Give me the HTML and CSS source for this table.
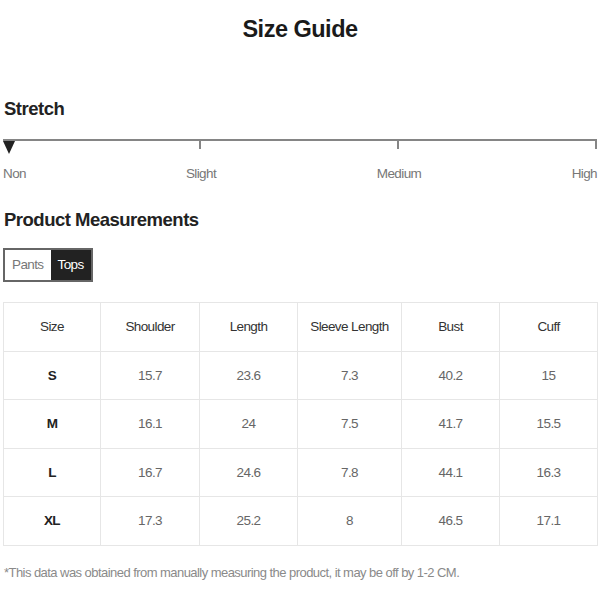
FILE: index.html
```html
<!DOCTYPE html>
<html>
<head>
<meta charset="utf-8">
<link rel="stylesheet" href="styles.css">
</head>
<body>
<div class="page">
  <h1 class="title">Size Guide</h1>

  <h2 class="section-title stretch-title">Stretch</h2>
  <div class="scale">
    <div class="track">
      <div class="seg"></div><div class="seg"></div><div class="seg"></div>
      <div class="marker"></div>
    </div>
    <div class="scale-labels">
      <span class="lbl lbl-start">Non</span>
      <span class="lbl lbl-mid">Slight</span>
      <span class="lbl lbl-mid">Medium</span>
      <span class="lbl lbl-end">High</span>
    </div>
  </div>

  <h2 class="section-title pm-title">Product Measurements</h2>
  <div class="tabs">
    <span class="tab">Pants</span>
    <span class="tab tab-active">Tops</span>
  </div>

  <table class="sizes">
    <colgroup>
      <col class="c1"><col class="c2"><col class="c3"><col class="c4"><col class="c5"><col class="c6">
    </colgroup>
    <thead>
      <tr><th>Size</th><th>Shoulder</th><th>Length</th><th>Sleeve Length</th><th>Bust</th><th>Cuff</th></tr>
    </thead>
    <tbody>
      <tr><td class="sz">S</td><td>15.7</td><td>23.6</td><td>7.3</td><td>40.2</td><td>15</td></tr>
      <tr><td class="sz">M</td><td>16.1</td><td>24</td><td>7.5</td><td>41.7</td><td>15.5</td></tr>
      <tr><td class="sz">L</td><td>16.7</td><td>24.6</td><td>7.8</td><td>44.1</td><td>16.3</td></tr>
      <tr><td class="sz">XL</td><td>17.3</td><td>25.2</td><td>8</td><td>46.5</td><td>17.1</td></tr>
    </tbody>
  </table>

  <p class="note">*This data was obtained from manually measuring the product, it may be off by 1-2 CM.</p>
</div>
</body>
</html>
```

FILE: styles.css
```css
html, body {
  margin: 0;
  padding: 0;
  background: #fff;
}
body {
  font-family: "Liberation Sans", Arial, sans-serif;
  color: #222;
}
.page {
  width: 594px;
  padding: 0 3px;
}
.title {
  margin: 0;
  padding-top: 13px;
  height: 36px;
  line-height: 32px;
  text-align: center;
  font-size: 23.5px;
  letter-spacing: -0.5px;
  font-weight: bold;
  color: #1a1a1a;
}
.section-title {
  margin: 0;
  font-size: 18.5px;
  letter-spacing: -0.5px;
  font-weight: bold;
  color: #222;
  line-height: 24px;
  padding-left: 1px;
}
.stretch-title {
  margin-top: 48px;
}
.scale {
  margin-top: 18px;
}
.track {
  position: relative;
  display: grid;
  grid-template-columns: repeat(3, 1fr);
  border-top: 2px solid #858585;
}
.seg {
  height: 8px;
  border-right: 2px solid #858585;
}
.marker {
  position: absolute;
  left: 0;
  top: 0;
  width: 0;
  height: 0;
  border-left: 6px solid transparent;
  border-right: 6px solid transparent;
  border-top: 13px solid #222;
}
.scale-labels {
  display: grid;
  grid-template-columns: 1fr 2fr 2fr 1fr;
  margin-top: 16px;
  font-size: 13.5px;
  letter-spacing: -0.6px;
  line-height: 18px;
  color: #777;
}
.lbl-start { text-align: left; }
.lbl-mid { text-align: center; }
.lbl-end { text-align: right; }
.pm-title {
  margin-top: 25px;
}
.tabs {
  display: inline-flex;
  margin-top: 16px;
  border: 2px solid #666;
  font-size: 13.5px;
  letter-spacing: -0.6px;
  line-height: 30px;
}
.tab {
  padding: 0 7px;
  color: #777;
  background: #fff;
}
.tab-active {
  background: #222;
  color: #fff;
  padding: 0 7px;
}
.sizes {
  width: 594px;
  table-layout: fixed;
  margin-top: 20px;
  border-collapse: collapse;
  font-size: 13.5px;
  letter-spacing: -0.6px;
}
.c1 { width: 97px; }
.c2 { width: 99px; }
.c3 { width: 98px; }
.c4 { width: 104px; }
.c5 { width: 98px; }
.c6 { width: 98px; }
.sizes th, .sizes td {
  border: 1px solid #e6e6e6;
  height: 47.5px;
  padding: 0 4px;
  text-align: center;
  vertical-align: middle;
}
.sizes th {
  font-weight: normal;
  color: #333;
}
.sizes td {
  color: #666;
}
.sizes td.sz {
  color: #222;
  font-weight: bold;
}
.note {
  margin: 19px 0 0 1px;
  font-size: 13px;
  letter-spacing: -0.55px;
  color: #8a8a8a;
}
```
